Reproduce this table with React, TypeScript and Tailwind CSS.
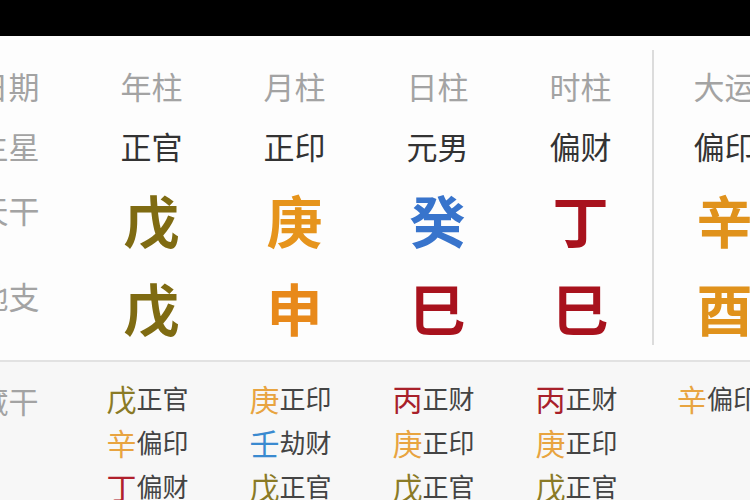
const stemColor: Record<string, string> = {
  戊: 'text-[#7f6b12]',
  庚: 'text-[#e6941c]',
  申: 'text-[#e8891a]',
  癸: 'text-[#3874cc]',
  丁: 'text-[#a8121d]',
  巳: 'text-[#a8121d]',
  辛: 'text-[#e0921c]',
  酉: 'text-[#e0921c]',
  壬: 'text-[#3a86cc]',
  丙: 'text-[#a8121d]',
};

const smallColor: Record<string, string> = {
  戊: 'text-[#8a7a26]',
  庚: 'text-[#e8a440]',
  辛: 'text-[#e8a440]',
  壬: 'text-[#3a8ad0]',
  丁: 'text-[#b0202c]',
  丙: 'text-[#a8202a]',
};

const pillars = [
  { title: '年柱', star: '正官', gan: '戊', zhi: '戊', hidden: [['戊', '正官'], ['辛', '偏印'], ['丁', '偏财']] },
  { title: '月柱', star: '正印', gan: '庚', zhi: '申', hidden: [['庚', '正印'], ['壬', '劫财'], ['戊', '正官']] },
  { title: '日柱', star: '元男', gan: '癸', zhi: '巳', hidden: [['丙', '正财'], ['庚', '正印'], ['戊', '正官']] },
  { title: '时柱', star: '偏财', gan: '丁', zhi: '巳', hidden: [['丙', '正财'], ['庚', '正印'], ['戊', '正官']] },
];

const dayun = { title: '大运', star: '偏印', gan: '辛', zhi: '酉', hidden: [['辛', '偏印']] };

function Column({ p, divider }: { p: typeof dayun; divider?: boolean }) {
  return (
    <div className={`flex h-[295px] w-[143px] shrink-0 flex-col items-center pt-[5px] ${divider ? 'border-l-2 border-[#dcdcdc]' : ''}`}>
      <div className="flex h-[60px] shrink-0 items-center text-[31px] leading-none text-[#a3a3a3]">{p.title}</div>
      <div className="flex h-[60px] shrink-0 items-center text-[31px] leading-none text-[#333]">{p.star}</div>
      <div className={`flex h-[88px] shrink-0 items-center text-[56px] font-bold leading-none ${stemColor[p.gan]}`}>{p.gan}</div>
      <div className={`flex h-[88px] shrink-0 items-center text-[56px] font-bold leading-none ${stemColor[p.zhi]}`}>{p.zhi}</div>
    </div>
  );
}

function Hidden({ items, dy }: { items: string[][]; dy?: boolean }) {
  return (
    <div className={`flex w-[143px] shrink-0 flex-col ${dy ? 'items-start pl-[25px]' : 'items-center pr-2'}`}>
      {items.map(([g, t], i) => (
        <div key={i} className="flex h-[44px] items-center leading-none">
          <span className={`text-[30px] ${smallColor[g]}`}>{g}</span>
          <span className="text-[26px] text-[#444]">{t}</span>
        </div>
      ))}
    </div>
  );
}

export default function App() {
  return (
    <div className="h-[500px] w-[750px] overflow-hidden bg-[#fdfdfd] font-['Noto_Sans_CJK_SC',sans-serif]">
      <div className="h-[36px] bg-black" />
      <div className="flex h-[324px] pt-[14px] -ml-[63px]">
        <div className="flex h-[295px] w-[143px] shrink-0 flex-col items-center pt-[5px] text-[31px] leading-none text-[#a3a3a3]">
          <div className="flex h-[60px] shrink-0 items-center">日期</div>
          <div className="flex h-[60px] shrink-0 items-center">主星</div>
          <div className="flex h-[68px] shrink-0 items-center">天干</div>
          <div className="flex h-[104px] shrink-0 items-center">地支</div>
        </div>
        {pillars.map((p) => (
          <Column key={p.title} p={p} />
        ))}
        <Column p={dayun} divider />
      </div>
      <div className="h-[2px] bg-[#e2e2e2]" />
      <div className="flex h-[200px] bg-[#f7f7f7] pt-[14px] -ml-[63px]">
        <div className="flex w-[143px] shrink-0 flex-col items-center">
          <div className="flex h-[48px] items-center text-[30px] leading-none text-[#a3a3a3]">藏干</div>
        </div>
        {pillars.map((p) => (
          <Hidden key={p.title} items={p.hidden} />
        ))}
        <Hidden items={dayun.hidden} dy />
      </div>
    </div>
  );
}
